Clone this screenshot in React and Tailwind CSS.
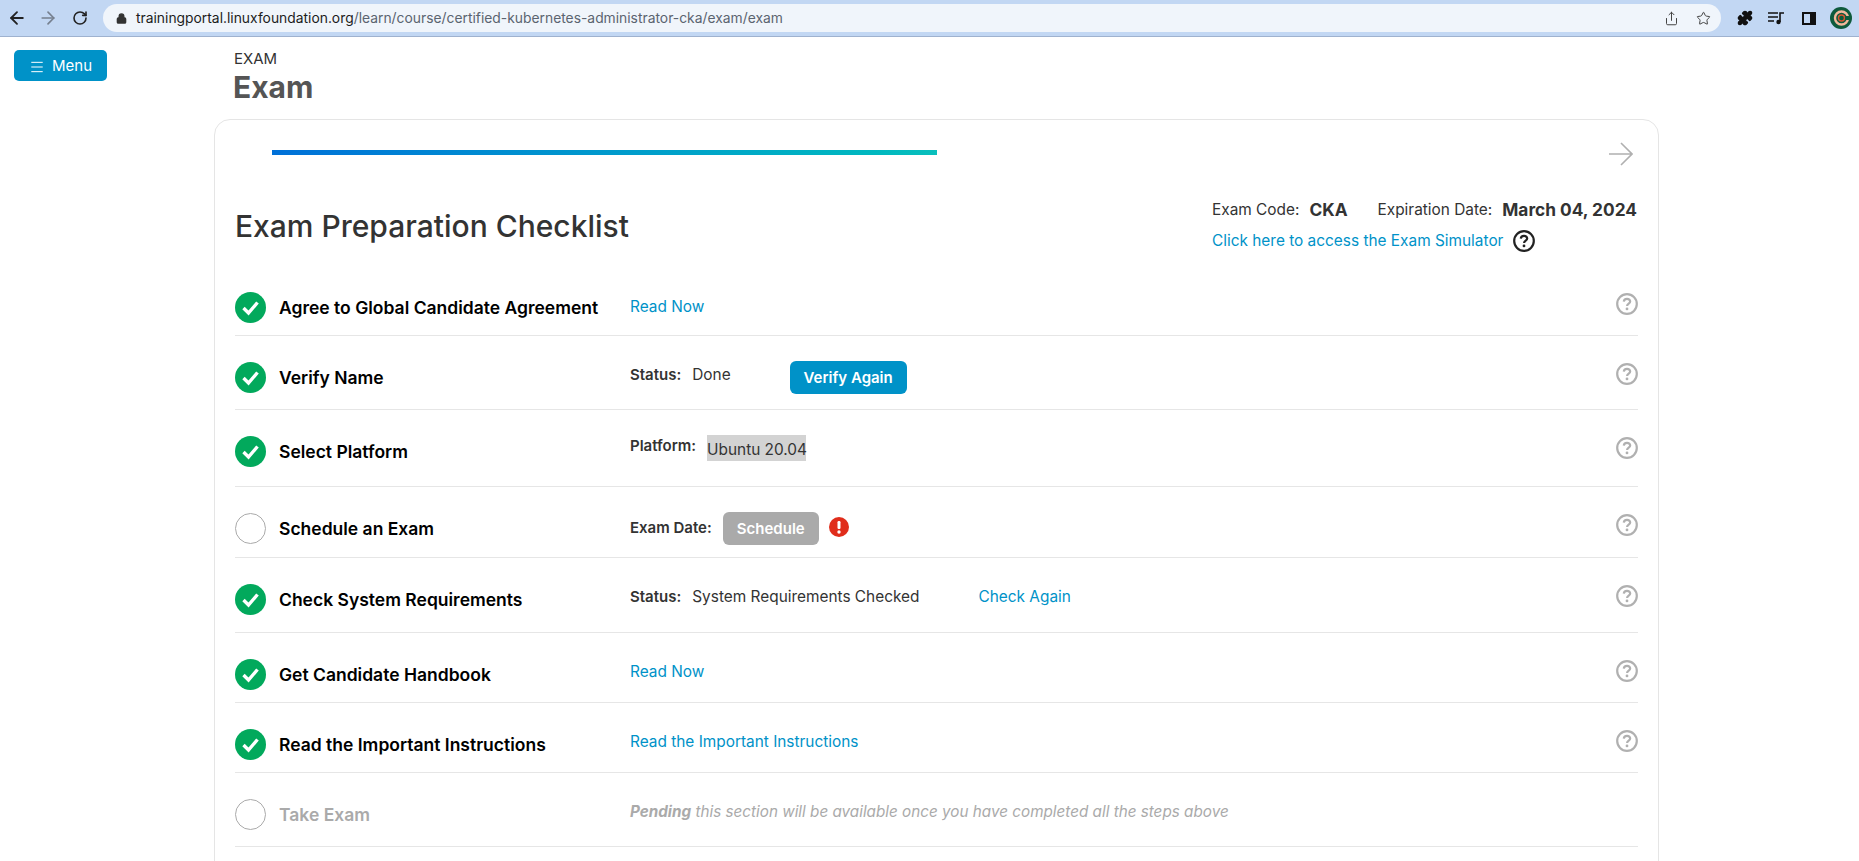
import React from "react";
import { ArrowLeft, ArrowRight, RotateCw, Lock, Share, Star, Puzzle, Menu as MenuIcon } from "lucide-react";

const Check = () => (
  <svg width="31" height="31" viewBox="0 0 31 31" className="shrink-0">
    <circle cx="15.5" cy="15.5" r="15.5" fill="#02a95c" />
    <path d="M8.5 16 L13.5 21 L22.5 10.5" fill="none" stroke="#fff" strokeWidth="3.4" />
  </svg>
);
const Empty = () => <div className="w-[31px] h-[31px] shrink-0 rounded-full border border-[#aaaaaa] bg-white" />;
const Help = ({ dark, size = 22 }) => (
  <svg width={size} height={size} viewBox="0 0 22 22" className="shrink-0">
    <circle cx="11" cy="11" r="9.8" fill="none" stroke={dark ? "#222" : "#b0b0b0"} strokeWidth="2.2" />
    <path d="M7.8 8.6 C7.9 6.6 9.3 5.8 11 5.8 C12.9 5.8 14.2 6.9 14.2 8.4 C14.2 10.6 11.1 10.6 11.1 13" fill="none" stroke={dark ? "#222" : "#b0b0b0"} strokeWidth="2.2" />
    <circle cx="11" cy="15.9" r="1.4" fill={dark ? "#222" : "#b0b0b0"} />
  </svg>
);
const Link = ({ children, cls = "" }) => <a className={"text-[#0092c8] text-[15.4px] leading-[22px] whitespace-nowrap " + cls}>{children}</a>;
const Key = ({ children, cls = "" }) => <span className={"font-semibold text-[15px] text-[#333] leading-[22px] " + cls}>{children}</span>;

const Row = ({ h, pt = "pt-[26px]", done, label, muted, children }) => (
  <div className={"flex items-start border-b border-[#e6e6e6] " + h + " " + pt}>
    <div className="flex items-start w-[395px] shrink-0">
      {done ? <Check /> : <Empty />}
      <span className={"ml-[13px] mt-[5px] text-[17.5px] font-semibold leading-[22px] whitespace-nowrap " + (muted ? "text-[#aaaaaa]" : "text-black")}>{label}</span>
    </div>
    <div className="flex-1 flex items-start text-[15.4px] leading-[22px] text-[#333]">{children}</div>
    {!muted && <div className="mt-[1px]"><Help /></div>}
  </div>
);

export default function App() {
  return (
    <div className="w-[1859px] h-[861px] overflow-hidden bg-white font-['Inter','Liberation_Sans',sans-serif]">
      <div className="h-[37px] bg-[#c2d7f3] border-b border-[#9fb2cf] flex items-center pl-[7px] pr-[7px]">
        <div className="flex items-center w-[95px] text-[#222]">
          <ArrowLeft size={20} strokeWidth={2.2} />
          <ArrowRight size={20} strokeWidth={2} className="ml-[11px] text-[#76808f]" />
          <RotateCw size={16} strokeWidth={2.4} className="ml-[14px]" />
        </div>
        <div className="ml-[1px] w-[1618px] h-[28px] rounded-full bg-[#f0f5fb] flex items-center pl-[13px] pr-[10px] text-[13.85px]">
          <Lock size={11} strokeWidth={3} fill="#333" className="text-[#333] mr-[9px]" />
          <span className="text-[#1d1d1d]">trainingportal.linuxfoundation.org</span>
          <span className="text-[#5b6470]">/learn/course/certified-kubernetes-administrator-cka/exam/exam</span>
          <div className="ml-auto flex items-center text-[#444]">
            <Share size={15} strokeWidth={1.6} />
            <Star size={15} strokeWidth={1.6} className="ml-[17px]" />
          </div>
        </div>
        <div className="flex items-center ml-[16px] text-[#111]">
          <Puzzle size={16} fill="#111" strokeWidth={2} />
          <svg width="17" height="14" viewBox="0 0 17 14" className="ml-[15px]">
            <path d="M0 2h10M0 6h10M0 10h6" stroke="#111" strokeWidth="1.6" />
            <path d="M12 11V2h4" fill="none" stroke="#111" strokeWidth="1.6" />
            <circle cx="10.5" cy="11" r="2.2" fill="#111" />
          </svg>
          <svg width="14" height="13" viewBox="0 0 14 13" className="ml-[17px]">
            <rect x="1" y="1" width="12" height="11" fill="none" stroke="#111" strokeWidth="2" />
            <rect x="8" y="1" width="5" height="11" fill="#111" />
          </svg>
          <svg width="22" height="22" viewBox="0 0 22 22" className="ml-[14px]">
            <circle cx="11" cy="11" r="11" fill="#0e5a3c" />
            <circle cx="11.5" cy="11" r="6.5" fill="none" stroke="#f2b79a" strokeWidth="2.4" />
            <circle cx="11.5" cy="11" r="3" fill="none" stroke="#d9532f" strokeWidth="1.4" />
            <rect x="15" y="9" width="6" height="4" fill="#0e5a3c" />
          </svg>
        </div>
      </div>

      <div className="flex">
        <div className="w-[214px] shrink-0 pl-[14px] pt-[13px]">
          <button className="w-[93px] h-[31px] pt-[2px] rounded-[5px] bg-[#0092c8] text-white text-[15px] flex items-center justify-center">
            <MenuIcon size={16} strokeWidth={1.5} className="mr-[7px]" />
            Menu
          </button>
        </div>
        <div className="w-[1445px] shrink-0">
          <div className="pl-[19px] pt-[13px] h-[82px]">
            <div className="text-[15px] leading-[18px] text-[#333] pl-[1px]">EXAM</div>
            <div className="text-[30px] leading-[36px] font-bold text-[#555555] mt-[1px]">Exam</div>
          </div>
          <div className="h-[800px] rounded-[16px] border border-[#e5e5e5] pl-[20px] pr-[20px]">
            <div className="flex items-start h-[57px]">
              <div className="ml-[37px] mt-[30px] w-[665px] h-[5px] bg-gradient-to-r from-[#0070d8] to-[#0abfbc]" />
              <svg width="24" height="24" viewBox="0 0 24 24" className="ml-auto mt-[22px] mr-[5px]">
                <path d="M0 12H23M12 1L23 12L12 23" fill="none" stroke="#b0b0b0" strokeWidth="1.6" />
              </svg>
            </div>
            <div className="flex items-start h-[84px]">
              <h1 className="text-[30px] leading-[36px] font-[450] text-[#333] mt-[31px] whitespace-nowrap">Exam Preparation Checklist</h1>
              <div className="ml-auto w-[426px] whitespace-nowrap">
                <div className="flex items-center h-[24px] mt-[21px] text-[15.4px] text-[#333]">
                  <span>Exam Code:</span>
                  <span className="font-bold text-[17.3px] ml-[10px]">CKA</span>
                  <span className="ml-[30px]">Expiration Date:</span>
                  <span className="font-bold text-[17.3px] ml-[10px]">March 04, 2024</span>
                </div>
                <div className="flex items-center h-[24px] mt-[7px]">
                  <Link>Click here to access the Exam Simulator</Link>
                  <span className="ml-[10px]"><Help dark /></span>
                </div>
              </div>
            </div>
            <div className="flex flex-col">
              <Row h="h-[75px]" pt="pt-[31px]" done label="Agree to Global Candidate Agreement"><Link cls="mt-[4px]">Read Now</Link></Row>
              <Row h="h-[74px]" done label="Verify Name">
                <Key cls="mt-[2px]">Status:</Key><span className="ml-[11px] mt-[2px]">Done</span>
                <button className="ml-[59px] -mt-[1px] w-[117px] h-[33px] rounded-[6px] bg-[#0092c8] text-white text-[15px] font-semibold">Verify Again</button>
              </Row>
              <Row h="h-[77px]" done label="Select Platform">
                <Key cls="-mt-[1px]">Platform:</Key><span className="ml-[11px] -mt-[1px] bg-[#d3d3d3] w-[99px] h-[26px] text-center leading-[30px] whitespace-nowrap">Ubuntu 20.04</span>
              </Row>
              <Row h="h-[71px]" label="Schedule an Exam">
                <Key cls="mt-[4px]">Exam Date:</Key>
                <button className="ml-[11px] -mt-[1px] w-[96px] h-[33px] rounded-[6px] bg-[#aaaaaa] text-white text-[15px] font-semibold">Schedule</button>
                <svg width="20" height="20" viewBox="0 0 20 20" className="ml-[10px] mt-[4px]">
                  <circle cx="10" cy="10" r="10" fill="#e02d1b" />
                  <rect x="8.5" y="4" width="3" height="8" rx="1.2" fill="#fff" />
                  <circle cx="10" cy="15" r="1.7" fill="#fff" />
                </svg>
              </Row>
              <Row h="h-[75px]" done label="Check System Requirements">
                <Key cls="mt-[2px]">Status:</Key><span className="ml-[11px] mt-[2px]">System Requirements Checked</span>
                <Link cls="ml-[59px] mt-[2px]">Check Again</Link>
              </Row>
              <Row h="h-[70px]" done label="Get Candidate Handbook"><Link cls="mt-[2px]">Read Now</Link></Row>
              <Row h="h-[70px]" done label="Read the Important Instructions"><Link cls="mt-[2px]">Read the Important Instructions</Link></Row>
              <Row h="h-[74px]" muted label="Take Exam">
                <span className="italic text-[#aaaaaa] text-[15.25px] mt-[2px]"><b className="font-bold">Pending</b> this section will be available once you have completed all the steps above</span>
              </Row>
            </div>
          </div>
        </div>
      </div>
    </div>
  );
}
